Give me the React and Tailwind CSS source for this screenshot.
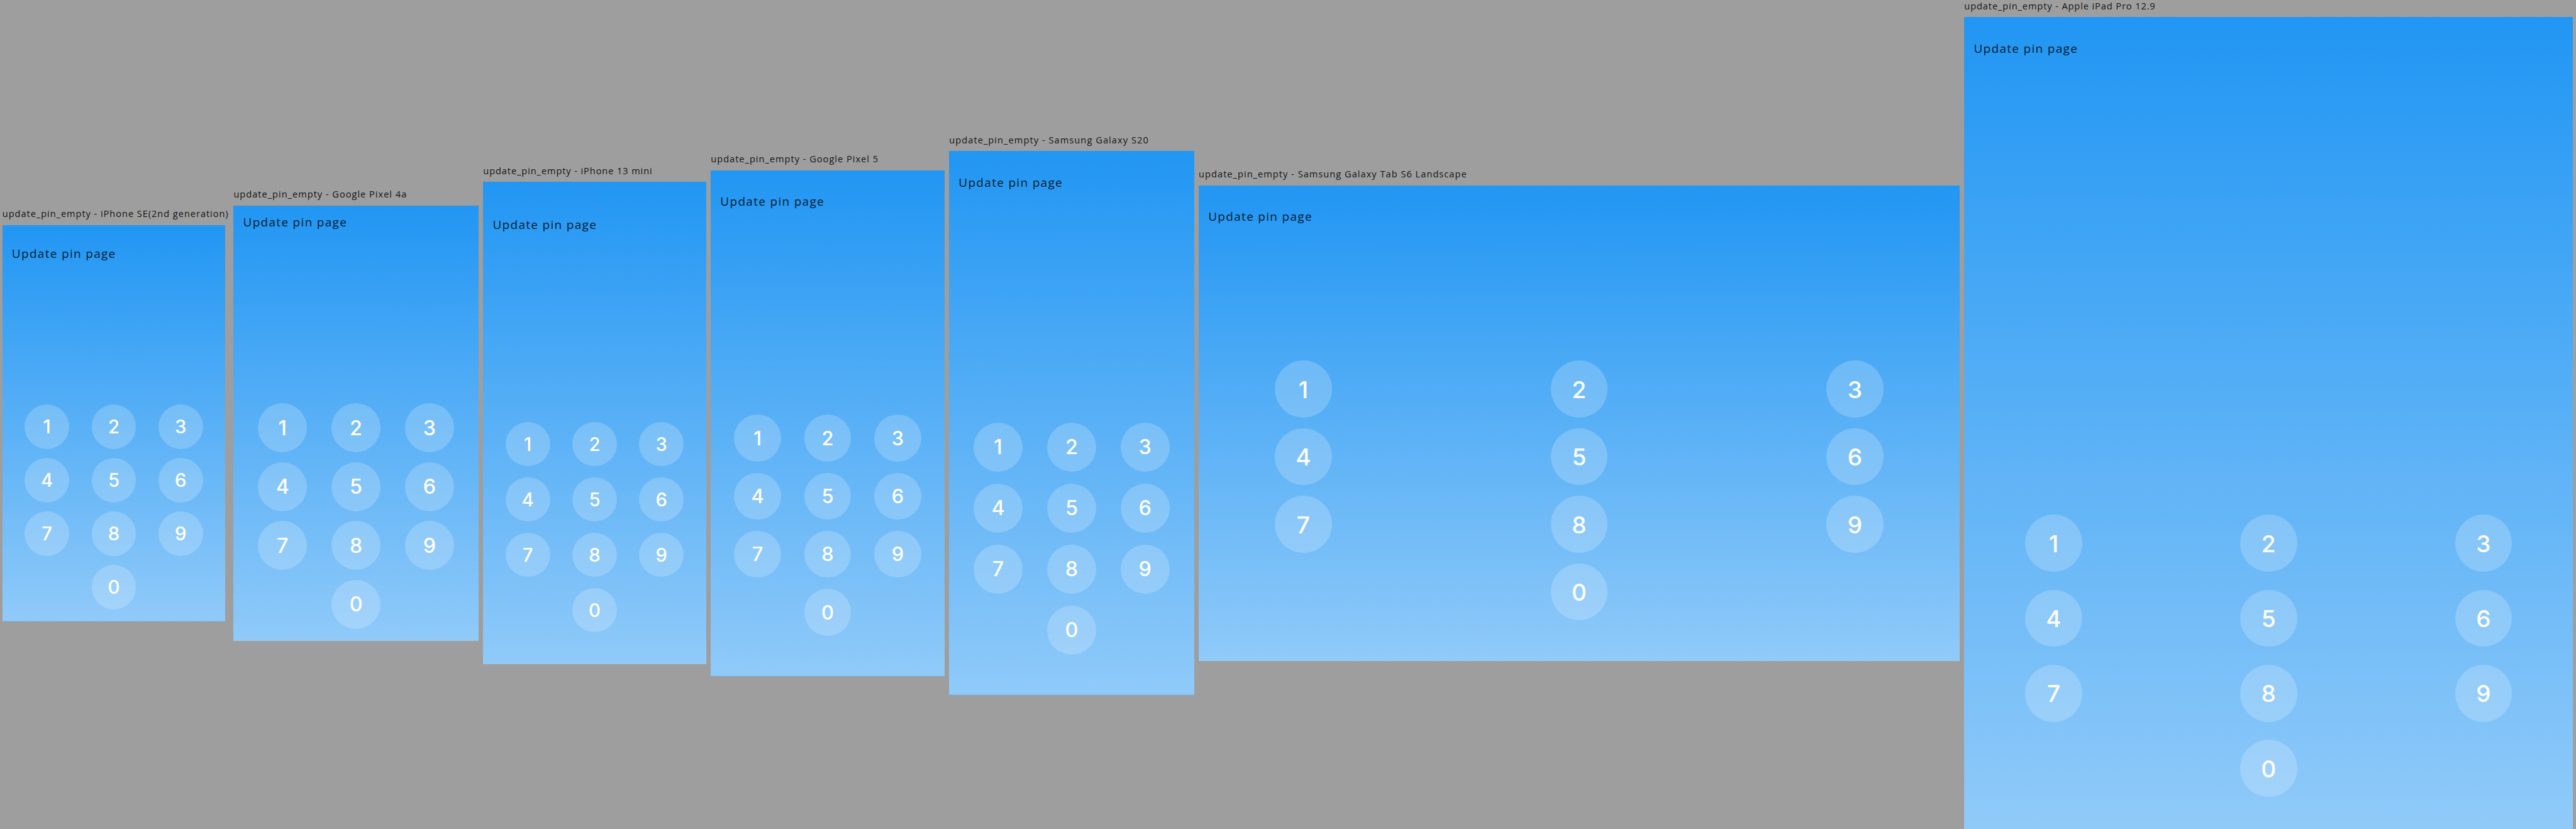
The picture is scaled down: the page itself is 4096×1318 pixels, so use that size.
const ROWS = [["1", "2", "3"], ["4", "5", "6"], ["7", "8", "9"], ["0"]];

const DEVICES = [
  {
    name: "iPhone SE(2nd generation)",
    column: "w-[360.08px]",
    label: "tracking-[0.93px]",
    screen: "w-[354.41px] h-[630.37px] pt-[33.8px] pb-[18px] border-b border-white/40",
    keypad: "gap-[14.18px]",
    key: "size-[70.88px] text-[29.4px]",
  },
  {
    name: "Google Pixel 4a",
    column: "w-[389.37px]",
    label: "tracking-[0.97px]",
    screen: "w-full h-[691.8px] pt-[14.7px] pb-[19px]",
    keypad: "gap-[15.6px]",
    key: "size-[77.87px] text-[32.3px]",
  },
  {
    name: "iPhone 13 mini",
    column: "w-[354.41px]",
    label: "tracking-[0.88px]",
    screen: "w-full h-[767.4px] pt-[56.2px] pb-[51px]",
    keypad: "gap-[17.1px]",
    key: "size-[70.88px] text-[29.4px]",
  },
  {
    name: "Google Pixel 5",
    column: "w-[371.42px]",
    label: "tracking-[0.97px]",
    screen: "w-full h-[804.26px] pt-[37.6px] pb-[63.2px] border-b border-white/40",
    keypad: "gap-[18.05px]",
    key: "size-[74.28px] text-[30.8px]",
  },
  {
    name: "Samsung Galaxy S20",
    column: "w-[389.37px]",
    label: "tracking-[1.04px]",
    screen: "w-full h-[864.75px] pt-[37.6px] pb-[63.4px] border-b border-white/40",
    keypad: "gap-[19.2px]",
    key: "size-[77.87px] text-[32.3px]",
  },
  {
    name: "Samsung Galaxy Tab S6 Landscape",
    column: "w-[1209.7px]",
    label: "tracking-[1px]",
    screen: "w-full h-[756.06px] pt-[37.6px] pb-[64.3px]",
    keypad: "gap-[16.8px]",
    key: "size-[90.73px] text-[37px]",
  },
  {
    name: "Apple iPad Pro 12.9",
    column: "w-[967.76px]",
    label: "tracking-[0.87px]",
    screen: "w-full h-[1290.98px] pt-[37.6px] pb-[51.1px]",
    keypad: "gap-[28.7px]",
    key: "size-[90.73px] text-[37px]",
  },
];

function Key({ digit, className }) {
  return (
    <button
      className={`flex items-center justify-center rounded-full bg-white/20 pt-px font-['Inter',sans-serif] leading-none font-medium text-white ${className}`}
    >
      {digit}
    </button>
  );
}

function Keypad({ device }) {
  return (
    <div className={`mt-auto flex flex-col px-[10%] ${device.keypad}`}>
      {ROWS.map((row) => (
        <div key={row[0]} className={row.length > 1 ? "flex justify-between" : "flex justify-center"}>
          {row.map((digit) => (
            <Key key={digit} digit={digit} className={device.key} />
          ))}
        </div>
      ))}
    </div>
  );
}

function Device({ device }) {
  return (
    <section className={`flex shrink-0 flex-col ${device.column}`}>
      <h2 className={`h-[27.41px] text-[14.65px] leading-[19.2px] whitespace-nowrap text-black/90 ${device.label}`}>
        update_pin_empty - {device.name}
      </h2>
      <div className={`flex flex-col bg-linear-to-b/srgb from-[#2196f3] to-[#90caf9] ${device.screen}`}>
        <h1 className="pl-[15.1px] text-[19px] leading-[24.4px] tracking-[1.3px] text-black/85">Update pin page</h1>
        <Keypad device={device} />
      </div>
    </section>
  );
}

export default function App() {
  return (
    <main className="flex h-[1318px] w-[4096px] items-center gap-[7.56px] overflow-hidden bg-[#9e9e9e] pl-[3.78px] font-['Open_Sans',sans-serif]">
      {DEVICES.map((device) => (
        <Device key={device.name} device={device} />
      ))}
    </main>
  );
}
